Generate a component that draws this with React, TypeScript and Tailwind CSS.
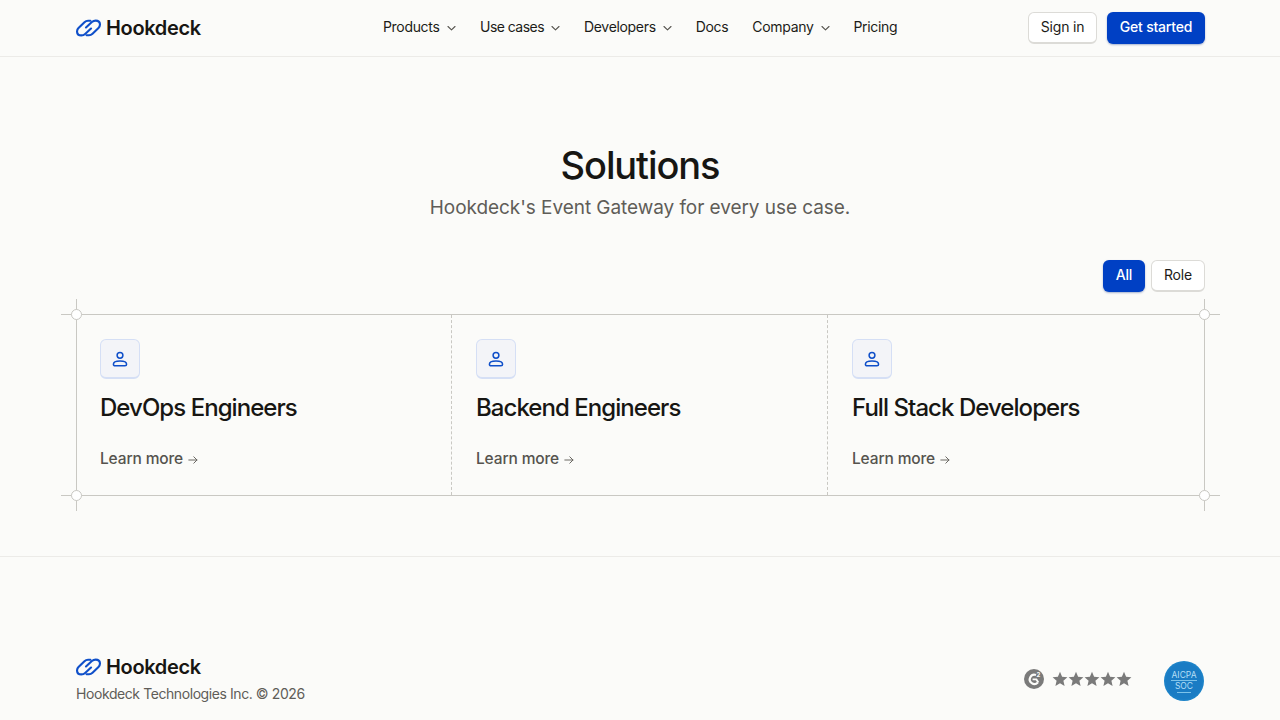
import React from "react";

const FONT = { fontFamily: "Inter, sans-serif" };

function Logo() {
  return (
    <svg width="25" height="18" viewBox="0 0 26 18" fill="none" className="shrink-0">
      <g stroke="#0f4fc9" strokeWidth="2.2" strokeLinecap="round" strokeLinejoin="round">
        <path d="M15 1.4 H12.5 Q10.5 1.4 8.8 3 L2.6 9 Q1 10.5 1.1 13 Q1.3 16.7 5.5 16.7 Q7.8 16.7 9.5 15.2 L15.6 9.6" />
        <path d="M11 16.6 H13.5 Q15.5 16.6 17.2 15 L23.4 9 Q25 7.5 24.9 5 Q24.7 1.3 20.5 1.3 Q18.2 1.3 16.5 2.8 L10.4 8.4" />
      </g>
    </svg>
  );
}

function Chevron({ extra }: { extra?: boolean }) {
  return (
    <svg width="9" height="10" viewBox="0.5 0 9 10" fill="none" className={`${extra ? "ml-[7.5px]" : "ml-[7px]"} mt-[2px]`}>
      <path d="M1.5 3.5 L5 6.8 L8.5 3.5" stroke="#55534e" strokeWidth="1.1" strokeLinecap="round" strokeLinejoin="round" />
    </svg>
  );
}

function NavItem({ label, chevron, tight, extra }: { label: string; chevron?: boolean; tight?: boolean; extra?: boolean }) {
  return (
    <a className={`flex items-center text-[14px] leading-5 text-[#1c1b18] ${tight ? "tracking-[-0.54px]" : "tracking-[-0.32px]"}`}>
      {label}
      {chevron && <Chevron extra={extra} />}
    </a>
  );
}

function Corner({ className }: { className: string }) {
  return (
    <div className={`absolute w-[31px] h-[31px] ${className}`}>
      <div className="absolute left-0 right-0 top-[15px] h-px bg-[#c9c8c3]" />
      <div className="absolute top-0 bottom-0 left-[15px] w-px bg-[#c9c8c3]" />
      <div className="absolute left-[10px] top-[10px] w-[11px] h-[11px] rounded-full bg-white border border-[#c9c8c3]" />
    </div>
  );
}

function Card({ title, first, last }: { title: string; first?: boolean; last?: boolean }) {
  return (
    <div className={`${first ? "pl-[23px]" : "pl-6"} pr-6 pt-6 pb-[26px] ${last ? "" : "border-r border-dashed border-[#c9c8c3]"}`}>
      <div className="w-10 h-10 rounded-[6px] bg-[#f3f4f8] border border-[#d5dff5] border-b-2 flex items-center justify-center">
        <svg width="16" height="16" viewBox="0 0 16 16" fill="none">
          <circle cx="8" cy="4.3" r="2.9" stroke="#0f4fc9" strokeWidth="1.5" />
          <path d="M1.4 13.2 C1.4 10.9 3.6 10 8 10 C12.4 10 14.6 10.9 14.6 13.2 C14.6 14.3 14 14.7 13 14.7 L3 14.7 C2 14.7 1.4 14.3 1.4 13.2 Z" stroke="#0f4fc9" strokeWidth="1.5" strokeLinejoin="round" />
        </svg>
      </div>
      <h3 className="mt-[14px] text-[24px] leading-[30px] font-medium tracking-[-0.95px] text-[#171613]">{title}</h3>
      <a className="mt-[26px] flex items-center text-[15.5px] leading-5 font-medium tracking-[-0.14px] text-[#55534e]">
        Learn more
        <svg width="10" height="10" viewBox="0 0 10 10" fill="none" className="ml-[5px] mt-px">
          <path d="M0.8 5 H9 M5.8 1.8 L9 5 L5.8 8.2" stroke="#6a6863" strokeWidth="1" strokeLinecap="round" strokeLinejoin="round" />
        </svg>
      </a>
    </div>
  );
}

function Star() {
  return (
    <svg width="16" height="16" viewBox="0 0 16 16" fill="#7a7a7a">
      <path d="M8 0.8 L10.1 5.7 L15.4 6.2 L11.4 9.7 L12.6 14.9 L8 12.2 L3.4 14.9 L4.6 9.7 L0.6 6.2 L5.9 5.7 Z" />
    </svg>
  );
}

export default function App() {
  return (
    <div style={FONT} className="min-h-[720px] bg-[#fbfbf9] overflow-hidden">
      <header className="h-[57px] border-b border-[#ecebe8] pl-[76px] pr-[75px] flex items-center">
        <div className="w-[307px] flex items-center gap-[5px]">
          <Logo />
          <span className="text-[20px] leading-6 font-semibold tracking-[-0.35px] text-[#171613]">Hookdeck</span>
        </div>
        <nav className="flex items-center gap-6 mb-[2px]">
          <NavItem label="Products" chevron extra />
          <NavItem label="Use cases" chevron tight />
          <NavItem label="Developers" chevron />
          <NavItem label="Docs" />
          <NavItem label="Company" chevron />
          <NavItem label="Pricing" />
        </nav>
        <div className="ml-auto flex items-center gap-[10px]">
          <button className="h-8 w-[69px] pb-[3px] rounded-[6px] bg-white border border-[#dcdbd7] border-b-2 text-[14px] tracking-[-0.2px] text-[#1c1b18]">Sign in</button>
          <button className="h-8 w-[98px] pb-[3px] rounded-[6px] bg-[#0040c4] shadow-[0_1px_2px_rgba(0,40,130,0.35)] text-[14px] font-medium tracking-[-0.2px] text-white">Get started</button>
        </div>
      </header>

      <main className="px-[76px]">
        <h1 className="mt-[86px] text-center text-[38px] leading-11 font-medium tracking-[-1.1px] text-[#171613]">Solutions</h1>
        <p className="mt-[9px] text-center text-[19px] leading-6 tracking-[-0.06px] text-[#5f5d58]">Hookdeck's Event Gateway for every use case.</p>
        <div className="mt-[40px] -mr-px flex justify-end gap-[6px]">
          <button className="h-8 w-[42px] pb-[3px] rounded-[6px] bg-[#0040c4] shadow-[0_1px_2px_rgba(0,40,130,0.35)] text-[14px] font-medium tracking-[-0.2px] text-white">All</button>
          <button className="h-8 w-[54px] pb-[3px] rounded-[6px] bg-white border border-[#dcdbd7] border-b-2 text-[14px] tracking-[-0.2px] text-[#1c1b18]">Role</button>
        </div>
        <div className="relative mt-[22px] w-[1129px] border border-[#c9c8c3] grid grid-cols-[375px_376px_1fr]">
          <Card title="DevOps Engineers" first />
          <Card title="Backend Engineers" />
          <Card title="Full Stack Developers" last />
          <Corner className="-left-[16px] -top-[16px]" />
          <Corner className="-right-[16px] -top-[16px]" />
          <Corner className="-left-[16px] -bottom-[16px]" />
          <Corner className="-right-[16px] -bottom-[16px]" />
        </div>
      </main>

      <footer className="mt-[60px] border-t border-[#ecebe8] px-[76px] pt-[98px] flex justify-between items-start">
        <div>
          <div className="flex items-center gap-[5px]">
            <Logo />
            <span className="text-[20px] leading-6 font-semibold tracking-[-0.35px] text-[#171613]">Hookdeck</span>
          </div>
          <p className="mt-[5px] text-[14px] leading-5 tracking-[-0.42px] text-[#5f5d58]">Hookdeck Technologies Inc. © 2026</p>
        </div>
        <div className="flex items-start gap-8 mt-[6px]">
          <div className="flex items-center gap-2 mt-2">
            <svg width="20" height="20" viewBox="0 0 20 20">
              <circle cx="10" cy="10" r="10" fill="#7a7a7a" />
              <path d="M12 6 A4.6 4.6 0 1 0 13.8 13.4" fill="none" stroke="#fbfbf9" strokeWidth="2.2" />
              <path d="M8.6 10.4 H12.4 L14.4 13.6" fill="none" stroke="#fbfbf9" strokeWidth="1.8" />
              <text x="12.6" y="8" fontSize="6" fontWeight="700" fill="#fbfbf9">2</text>
            </svg>
            <div className="flex">
              <Star /><Star /><Star /><Star /><Star />
            </div>
          </div>
          <div className="w-10 h-10 rounded-full bg-[radial-gradient(circle_at_50%_50%,#1a7cc4_0%,#1a7cc4_62%,#2aa3dc_100%)] flex flex-col items-center justify-center text-[8.5px] leading-[10px] text-[#b5def5]">
            <span>AICPA</span>
            <span className="w-[26px] h-px bg-[#7dc3ea]" />
            <span>SOC</span>
            <span className="w-[14px] h-px mt-px bg-[#7dc3ea]" />
          </div>
        </div>
      </footer>
    </div>
  );
}
